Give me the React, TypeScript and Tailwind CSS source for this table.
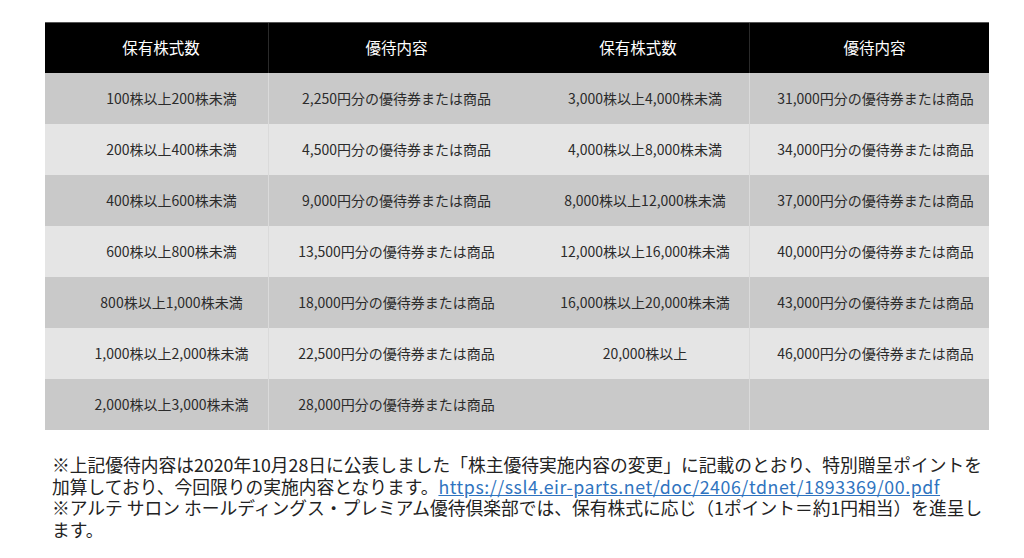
const rows: [string, string, string, string][] = [
  ["100株以上200株未満", "2,250円分の優待券または商品", "3,000株以上4,000株未満", "31,000円分の優待券または商品"],
  ["200株以上400株未満", "4,500円分の優待券または商品", "4,000株以上8,000株未満", "34,000円分の優待券または商品"],
  ["400株以上600株未満", "9,000円分の優待券または商品", "8,000株以上12,000株未満", "37,000円分の優待券または商品"],
  ["600株以上800株未満", "13,500円分の優待券または商品", "12,000株以上16,000株未満", "40,000円分の優待券または商品"],
  ["800株以上1,000株未満", "18,000円分の優待券または商品", "16,000株以上20,000株未満", "43,000円分の優待券または商品"],
  ["1,000株以上2,000株未満", "22,500円分の優待券または商品", "20,000株以上", "46,000円分の優待券または商品"],
  ["2,000株以上3,000株未満", "28,000円分の優待券または商品", "", ""],
]

export default function App() {
  return (
    <div
      className="min-h-screen bg-white pt-[22px] text-[#222]"
      style={{ fontFamily: '"Noto Sans CJK JP", "Noto Sans", sans-serif' }}
    >
      {/* 優待表 */}
      <div className="ml-[45px] w-[944px]">
        <div className="grid grid-cols-[223px_256px_225px_240px] h-[51px] bg-black text-white text-[15.5px] border-t border-[#555]">
          <div className="flex items-center justify-center pl-[9px]">保有株式数</div>
          <div className="flex items-center justify-center border-l border-[#2a2a2a]">優待内容</div>
          <div className="flex items-center justify-center pl-[3px]">保有株式数</div>
          <div className="flex items-center justify-center pl-[10px] border-l border-[#2a2a2a]">優待内容</div>
        </div>
        {rows.map((r, i) => (
          <div
            key={i}
            className={
              "grid grid-cols-[223px_256px_225px_240px] h-[51px] text-[14px] text-[#2b2b2b] " +
              (i % 2 === 0 ? "bg-[#c9c9c9]" : "bg-[#e5e5e5]")
            }
          >
            <div className="flex items-center justify-center pl-[30px]">{r[0]}</div>
            <div className="flex items-center justify-center border-l border-[#dadada]">{r[1]}</div>
            <div className="flex items-center justify-center pl-[17px]">{r[2]}</div>
            <div className="flex items-center justify-center pl-[12px] border-l border-[#dadada]">{r[3]}</div>
          </div>
        ))}
      </div>

      {/* 注記 */}
      <div className="ml-[52px] mt-[24px] w-[936px] text-[17.75px] leading-[21.5px] text-[#222]">
        <p>
          ※上記優待内容は2020年10月28日に公表しました「株主優待実施内容の変更」に記載のとおり、特別贈呈ポイントを加算しており、今回限りの実施内容となります。
          <a href="#" className="text-[#2f74c0] underline tracking-[0.55px]">
            https://ssl4.eir-parts.net/doc/2406/tdnet/1893369/00.pdf
          </a>
        </p>
        <p>
          ※アルテ サロン ホールディングス・プレミアム優待倶楽部では、保有株式に応じ（1ポイント＝約1円相当）を進呈します。
        </p>
      </div>
    </div>
  )
}
